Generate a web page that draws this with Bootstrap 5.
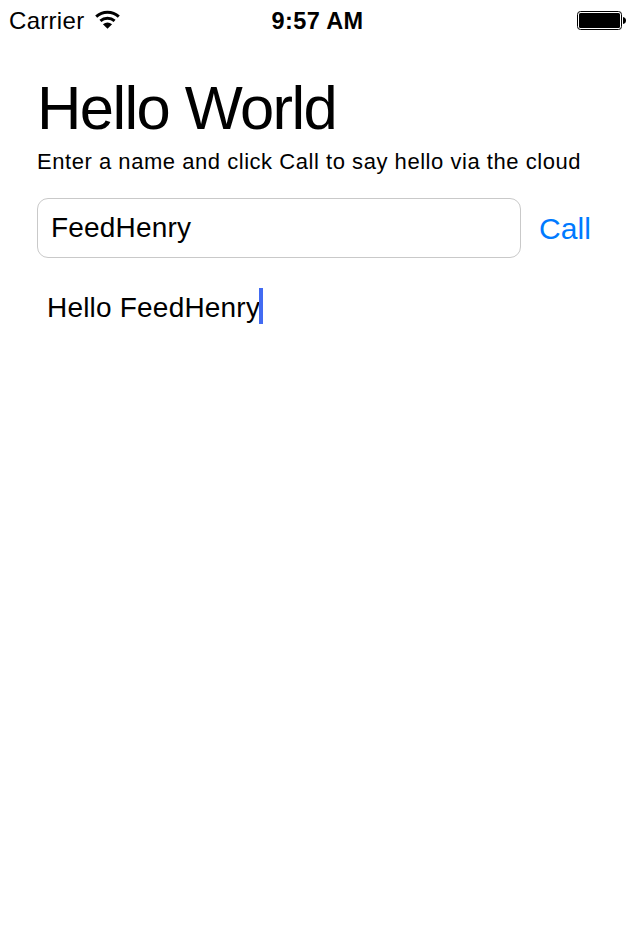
<!DOCTYPE html>
<html lang="en">
<head>
<meta charset="utf-8">
<meta name="viewport" content="width=device-width, initial-scale=1">
<title>Hello World</title>
<link href="https://cdn.jsdelivr.net/npm/bootstrap@5.3.0/dist/css/bootstrap.min.css" rel="stylesheet">
<style>
body { font-family: "Liberation Sans", Arial, sans-serif; color: #000; background: #fff; height: 946px; overflow: hidden; }
.status { height: 42px; padding: 0 8px 0 9px; display: grid; grid-template-columns: 1fr auto 1fr; font-size: 24px; line-height: 42px; }
.carrier { letter-spacing: .3px; }
.carrier svg { margin-left: 9px; }
.clock { font-size: 23.5px; font-weight: 700; letter-spacing: .4px; }
.main { padding: 37px 37px 0; }
.title { font-size: 61.5px; line-height: 58px; letter-spacing: -1.6px; font-weight: 400; }
.hint { font-size: 22px; line-height: 30px; letter-spacing: .54px; margin-top: 10px; white-space: nowrap; }
.entry { gap: 18px; margin-top: 21px; }
.name-field { width: 484px; height: 60px; border: 1px solid #c9c9c9; border-radius: 11px; padding: 0 13px; font-size: 28px; letter-spacing: .2px; color: #000; background: #fff; }
.call { font-size: 30px; line-height: 60px; color: #007aff; border: 0; padding: 1px 0 0; height: 60px; letter-spacing: .1px; }
.result { margin: 30px 0 0 10px; height: 36px; font-size: 28px; line-height: 40px; letter-spacing: .2px; }
.caret { width: 4px; height: 36px; background: #426bf2; margin-left: -1px; }
</style>
<script src="https://cdn.jsdelivr.net/npm/bootstrap@5.3.0/dist/js/bootstrap.bundle.min.js"></script>
</head>
<body>
<header class="status">
  <div class="d-flex align-items-center carrier"><span>Carrier</span>
    <svg width="30" height="24" viewBox="0 0 30 24" fill="none" stroke="#000" stroke-width="3" aria-label="Wi-Fi"><path d="M3.2 7.6a17 17 0 0 1 22.6 0M7.4 11.9a11 11 0 0 1 14.2 0"/><path d="M9.9 15.3a7.3 7.3 0 0 1 9.2 0L14.5 19.8z" fill="#000" stroke="none"/></svg>
  </div>
  <div class="clock">9:57 AM</div>
  <div class="d-flex justify-content-end align-items-center">
    <svg width="49" height="20" viewBox="0 0 49 20" aria-label="Battery"><rect x=".5" y=".5" width="44" height="18" rx="3" fill="none" stroke="#000"/><rect x="2" y="2" width="41" height="15" rx="1.5"/><path d="M46 6q3 .5 3 3.5t-3 3.5z"/></svg>
  </div>
</header>
<main class="main">
  <h1 class="title mb-0">Hello World</h1>
  <p class="hint mb-0">Enter a name and click Call to say hello via the cloud</p>
  <div class="entry d-flex">
    <input class="name-field" type="text" value="FeedHenry" aria-label="Name">
    <button class="btn call" type="button">Call</button>
  </div>
  <div class="result d-flex"><span>Hello FeedHenry</span><span class="caret"></span></div>
</main>
</body>
</html>
